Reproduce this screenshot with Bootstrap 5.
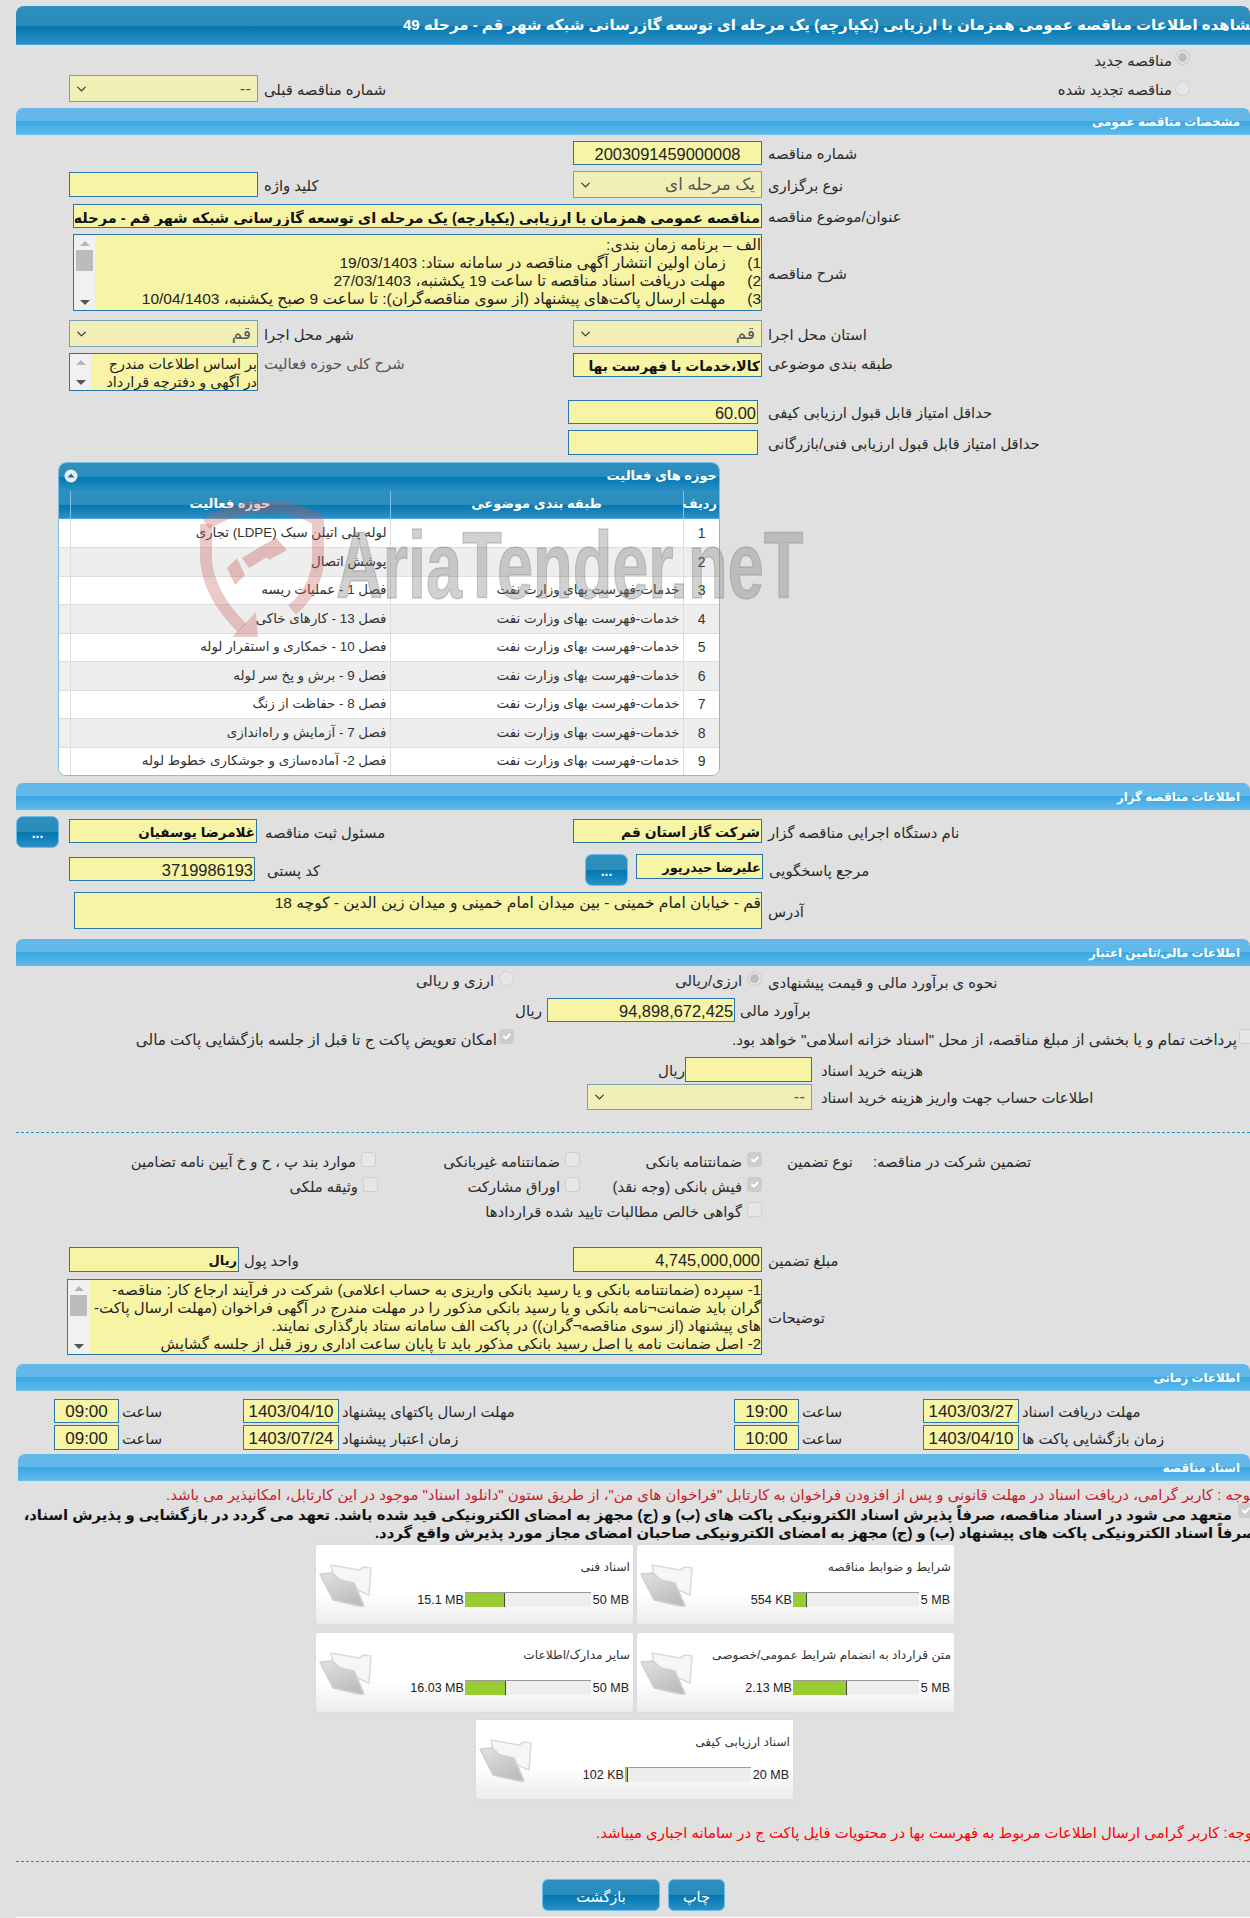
<!DOCTYPE html>
<html lang="fa">
<head>
<meta charset="utf-8">
<title>مشاهده اطلاعات مناقصه</title>
<link href="https://cdn.jsdelivr.net/npm/bootstrap@5.3.0/dist/css/bootstrap.min.css" rel="stylesheet">
<style>
html,body{margin:0;padding:0;background:#e0e0e0;overflow-x:hidden}
body{width:1250px;height:1918px;overflow:hidden;position:relative;font-family:"Liberation Sans","DejaVu Sans",sans-serif;font-size:14.8px;color:#2a2a2a;line-height:18px}
.ar{direction:rtl;unicode-bidi:isolate;white-space:nowrap}
.lbl{margin-left:6px;font-size:14.8px;color:#2a2a2a;direction:rtl;white-space:nowrap;align-self:center;flex:none;padding-top:2px}
.lbl-top{align-self:flex-start;margin-top:0}
.lbl-g{color:#555}
.ml5{margin-left:5px}.ml9{margin-left:9px}.ml10{margin-left:10px}.ml8{margin-left:8px}.ml3{margin-left:3px}.ml2{margin-left:2px}.ml12{margin-left:12px}
.bar-t{margin:6px 0 0 16px;height:39px;border-radius:8px 8px 0 0;background:linear-gradient(#2e90bf 0,#2b8cbc 50%,#0277b0 51%,#2b90c6 97%,#5ab3e8 100%);color:#fff;font-weight:700;font-size:15px;overflow:hidden;display:flex;align-items:center;padding-left:387px;padding-bottom:2px}
.bar-t span{flex:none}
.bar-s{margin-left:16px;height:27px;border-radius:7px 7px 0 0;background:linear-gradient(#62b9e9 0,#62b9e9 48%,#3aa8e2 50%,#5db8ea 97%,#86c9ef 100%);color:#fff;font-weight:700;font-size:11.8px;text-align:right;padding:5px 10px 0 0;direction:rtl;line-height:18px}
.rw{display:flex;width:1250px}
.cl{width:573px;flex:none;display:flex;padding-left:69px}
.cl568{width:568px}.cl585{width:585px}.cl16{padding-left:16px}
.cr{flex:none;display:flex}
.inp.form-control,.sel.form-select,.tbox{border:1px solid #2976ab;border-radius:0;background-color:#f7f5a5;color:#222;padding:0 1px;font-size:15px;line-height:20px;min-height:0;box-shadow:none;font-family:"Liberation Sans","DejaVu Sans",sans-serif}
.inp.form-control{height:24px;direction:rtl;text-align:right;flex:none;padding-top:2px}
.inp.ltr{text-align:center;font-size:16.4px}
.inp.tm{font-size:17px}
.inp.num{font-size:16.4px}
.inp.bd{font-weight:700;color:#111;font-size:13.9px}
.inp.ttl{font-size:14.55px}
.inp.bq1{font-size:13.5px}
.inp.bq2{font-size:13px}
.inp.h25{height:25px}
.sel.form-select{height:27px;border-color:#7c9fb4;background-color:#f2efb6;color:#555;direction:rtl;text-align:right;padding:0 6px 0 24px;background-position:left 5px center;background-size:13px 10px;font-size:16.8px;opacity:1;flex:none}
.w189{width:189px}.w127{width:127px}.w186{width:186px}.w170{width:170px}.w190{width:190px}.w188{width:188px}.w225{width:225px}.w96{width:96px}.w65{width:65px}.w689{width:689px}.w688{width:688px}.w695{width:695px}
.h77{height:77px}.h38{height:38px}.h37{height:37px}.h76{height:76px}
.mt3{margin-top:3px}
.ms73{margin-left:73px}.ms74{margin-left:74px}.ms67{margin-left:67px}
.tbox{display:flex;overflow:hidden;font-size:15px;line-height:18px;direction:ltr;padding:0;flex:none}
.tsm{font-size:14.4px}
.tlg{font-size:15.5px}
.sbar{flex:none;width:21px;background:#f1f1f1;display:flex;flex-direction:column;align-items:center;padding:6px 0 5px;justify-content:space-between}
.sbar i{display:block;width:0;height:0;border-left:5px solid transparent;border-right:5px solid transparent}
.sbar .up{border-bottom:5px solid #b5b5b5}
.sbar .dn{border-top:5px solid #555}
.sbar .th{flex:none;width:17px;height:21px;background:#bcbcbc;margin:4px 0 auto}
.ttxt{flex:1;direction:rtl;text-align:right;white-space:pre;padding:1px 0 0;overflow:hidden;color:#222;min-width:0}
.rg.form-check-input,.ck.form-check-input{margin:0;flex:none;float:none;width:15px;height:15px;opacity:1;background-color:#e6e6e6;border:1px solid #cfcfcf}
.rg.form-check-input{border-radius:50%}
.rg.form-check-input:checked{background-image:none;background-color:#bdbdbd;box-shadow:inset 0 0 0 2px #e6e6e6}
.ck.form-check-input{border-radius:3px}
.ck.form-check-input:checked{background-color:#cdcdcd;border-color:#cdcdcd}
.rg.form-check-input.mr60{margin-right:60px}
.gap1{margin-right:3px;align-self:center}
/* vertical rhythm */
.a1{height:20px;margin-top:5px}.a2{height:27px;margin-top:5px}
.s1{margin-top:6px}
.r1{height:24px;margin-top:6px}.r2{height:27px;margin-top:6px}.r3{height:24px;margin-top:6px}.r4{height:77px;margin-top:6px}
.r5{height:27px;margin-top:9px}.r6{height:38px;margin-top:6px}.r7{height:24px;margin-top:9px}.r8{height:25px;margin-top:6px}
.s2{margin-top:7px}
.q1{height:32px;margin-top:6px}.q2{height:32px;margin-top:6px}.q3{height:37px;margin-top:6px}
.s3{margin-top:10px}
.m1{height:22px;margin-top:5px}.m2{height:24px;margin-top:5px}.m3{height:19px;margin-top:7px}.m4{height:25px;margin-top:9px}.m5{height:26px;margin-top:2px}
.dsh{margin-left:16px;border-top:1px dashed #2a8cc4;height:0}
.d1{margin-top:22px}.d2{margin-top:19px}
.g1{height:20px;margin-top:19px}.g2{height:20px;margin-top:5px}.g3{height:20px;margin-top:5px}
.f1{height:25px;margin-top:25px}.f2{height:76px;margin-top:7px}
.s4{margin-top:9px}
.t1{height:24px;margin-top:8px}.t2{height:25px;margin-top:2px}
.s5{margin-top:4px;margin-left:18px}
/* fixed-width flex cells that push their content to the visual right */
.e{display:flex;justify-content:flex-end;align-items:flex-start;flex:none}
.e514{width:514px}.e248{width:248px}.e547{width:547px}.e685{width:685px}.e587{width:587px}.e740{width:740px}
.e376{width:376px}.e204{width:204px}.e378{width:378px}.e202{width:202px}.e182{width:182px}
.e-t{margin-right:5px;direction:rtl;white-space:nowrap;line-height:20px;font-size:14.8px}
.e-m{margin-right:5px;direction:rtl;white-space:nowrap;align-self:center;padding-top:2px;font-size:15px}
.e-c{margin-right:2px;font-size:15.2px}
.tc0{width:243px;padding-left:54px;display:flex;flex:none}
.tc1{width:491px;display:flex;flex:none}
.tc2{width:189px;display:flex;flex:none}
.tc3{display:flex;flex:none}
.gt1{margin-left:25px;direction:rtl;white-space:nowrap;line-height:20px}
.gt2{margin-left:20px;direction:rtl;white-space:nowrap;line-height:20px}
.rd1{height:17px;margin-top:5px;color:#c8202a;font-size:14.9px;padding-left:166px;display:flex;overflow:hidden}
.rd1 span{flex:none}
.bdn{height:39px;display:flex;overflow:hidden;width:1250px}
.bdn-t{flex:none;width:1232px;margin-top:3px;direction:rtl;font-weight:700;color:#111;font-size:14.8px;line-height:18px;text-align:right}
.l2{display:block;white-space:nowrap}
.l2b{margin-right:-24px}
.ckb{margin:0 0 0 6px !important}
.dots{width:43px;height:32px;padding:0;border-radius:7px;border:1px solid #6cbfe8;background:linear-gradient(#2e90bf 0,#2b8cbc 50%,#0277b0 51%,#2b90c6 100%);color:#fff;font-weight:700;font-size:14px;line-height:32px;flex:none}
.dots:hover{color:#fff}
.dm{margin-right:10px}
.dq{margin-right:8px}
/* panel */
.pnl{margin:7px 0 0 58px;width:662px;height:314px;border:1px solid #7fbde3;border-radius:8px;background:#fff;overflow:hidden;position:relative;padding:0}
.pnl-h{height:28px;background:linear-gradient(#2e90bf 0,#2b8cbc 50%,#0277b0 51%,#2b90c6 100%);color:#fff;font-weight:700;font-size:13px;direction:rtl;display:flex;justify-content:space-between;align-items:center;padding:0 2px 2px 5px}
.pnl-t.table{margin:0;table-layout:fixed;width:661px;direction:ltr;--bs-table-bg:transparent}
.pnl-t th{height:28px;padding:0 3px 2px;border:0;border-left:1px solid #7fc1ea;text-align:center;color:#fff;font-size:13px;font-weight:700;background:linear-gradient(#2e90bf 0,#2b8cbc 50%,#0277b0 51%,#2b90c6 96%,#6abbec 100%);direction:rtl;vertical-align:middle;line-height:18px}
.pnl-t th:first-child{border-left:0}
.pnl-t td{height:28.5px;padding:0 3px;border:0;border-left:1px solid #ddd;border-bottom:1px solid #ddd;font-size:13.4px;direction:rtl;text-align:right;vertical-align:middle;color:#333;white-space:nowrap;background:#fff;line-height:18px}
.pnl-t td:first-child{border-left:0}
.pnl-t tr:nth-child(even) td{background:#eee}
.pnl-t td:last-child{text-align:center;font-size:14px}
.c0{width:11px}.c1{width:320px}.c2{width:293px}.c3{width:37px}
.wm{position:absolute;left:200px;top:500px;width:610px;height:140px;pointer-events:none}
.wm-txt{position:absolute;left:136px;top:16px;font:700 94px/100px "Liberation Sans",sans-serif;color:rgba(120,120,120,.34);white-space:nowrap;transform:scaleX(.69);transform-origin:left top;-webkit-text-stroke:1.5px rgba(120,120,120,.34)}
.wm svg{position:absolute;left:0;top:0}
/* cards */
.cds{display:flex;gap:4px}
.cds1{margin:3px 0 0 316px}.cds2{margin:9px 0 0 316px}.cds3{margin:8px 0 0 476px}
.fc.card{width:317px;height:79px;flex:none;border:0;border-radius:2px;background:linear-gradient(#fff 0,#fff 60%,#ececec 100%);box-shadow:0 0 2px #d4d4d4;position:relative;display:block}
.fc-t{direction:rtl;text-align:right;font-size:12.2px;padding:13px 3px 0 0;white-space:nowrap;color:#333;height:47px;line-height:18px}
.fc svg{position:absolute;left:0;top:0}
.fc-p{display:flex;justify-content:flex-end;align-items:center;height:15px;font-size:12.5px;color:#222;padding-right:4px;white-space:nowrap}
.fc-a{flex:none;margin-right:1px}
.fc-b{padding-left:2px;flex:none}
.fc-p .progress{width:126px;height:15px;flex:none;border-radius:0;background:#eee;border-top:1px solid #999}
.fc-p .progress-bar{background:#99cc33;border-right:1px solid #444;box-sizing:border-box}
.fp{fill:#f6f6f6;stroke:#dadada;stroke-width:1.5;stroke-linejoin:round}
.ff{fill:url(#fg);stroke:#d0d0d0;stroke-width:1.6;stroke-linejoin:round}
.rd2{height:18px;margin-top:25px;padding-left:596px;display:flex;overflow:hidden;color:#f00;font-size:14.9px}
.rd2 span{flex:none}
.bts{display:flex;margin:17px 0 0 542px;gap:8px}
.bk{height:32px;width:118px;padding:3px 0 0;border-radius:6px;border:1px solid #6cbfe8;background:linear-gradient(#2e90bf 0,#2b8cbc 50%,#0277b0 51%,#2b90c6 100%);color:#fff;font-size:14.5px;line-height:20px}
.bk.nr{width:57px}
.bk:hover{color:#fff}
.wht{position:absolute;left:16px;right:0;top:1917px;height:1px;background:#fff}
</style>
</head>
<body>
<svg width="0" height="0" class="position-absolute"><defs><linearGradient id="fg" x1="0" y1="0" x2="0.6" y2="1"><stop offset="0" stop-color="#e2e2e2"/><stop offset="1" stop-color="#bdbdbd"/></linearGradient>
<symbol id="fold" viewBox="0 0 60 65"><path class="fp" d="M15 20 43 25 48 22 55 23 53 50 18 35z"/><path class="ff" d="M4 29 16 28 24 35 38 38 48 61 43 61 17 55C12 45 8 37 4 29z"/></symbol></defs></svg>
<div class="bar-t"><span class="ar">مشاهده اطلاعات مناقصه عمومی همزمان با ارزیابی (یکپارچه) یک مرحله ای توسعه گازرسانی شبکه شهر قم - مرحله 49</span></div>

<div class="rw a1 justify-content-end"><span class="lbl gap1">مناقصه جدید</span><input class="form-check-input rg mr60" type="radio" checked disabled></div>
<div class="rw a2">
 <div class="cl"><select class="form-select sel w189" disabled><option>--</option></select><span class="lbl">شماره مناقصه قبلی</span></div>
 <div class="cr ms-auto"><span class="lbl gap1">مناقصه تجدید شده</span><input class="form-check-input rg mr60 align-self-center" type="radio" disabled></div>
</div>

<div class="bar-s s1">مشخصات مناقصه عمومی</div>

<div class="rw r1"><div class="cl"></div><div class="cr"><input class="form-control inp ltr w189" readonly value="2003091459000008"><span class="lbl">شماره مناقصه</span></div></div>
<div class="rw r2">
 <div class="cl align-items-center"><input class="form-control inp w189 h25" readonly value=""><span class="lbl">کلید واژه</span></div>
 <div class="cr"><select class="form-select sel w189" disabled><option>یک مرحله ای</option></select><span class="lbl">نوع برگزاری</span></div>
</div>
<div class="rw r3"><div class="cr ms73"><input class="form-control inp bd ttl w689" readonly value="مناقصه عمومی همزمان با ارزیابی (یکپارچه) یک مرحله ای توسعه گازرسانی شبکه شهر قم - مرحله 49"><span class="lbl">عنوان/موضوع مناقصه</span></div></div>
<div class="rw r4"><div class="cr ms73"><div class="tbox tlg w689 h77"><div class="sbar"><i class="up"></i><div class="th"></div><i class="dn"></i></div><div class="ttxt">الف – برنامه زمان بندی:
1)     زمان اولین انتشار آگهی مناقصه در سامانه ستاد: 19/03/1403
2)     مهلت دریافت اسناد مناقصه تا ساعت 19 یکشنبه، 27/03/1403
3)     مهلت ارسال پاکت‌های پیشنهاد (از سوی مناقصه‌گران): تا ساعت 9 صبح یکشنبه، 10/04/1403</div></div><span class="lbl">شرح مناقصه</span></div></div>
<div class="rw r5">
 <div class="cl"><select class="form-select sel w189" disabled><option>قم</option></select><span class="lbl">شهر محل اجرا</span></div>
 <div class="cr"><select class="form-select sel w189" disabled><option>قم</option></select><span class="lbl">استان محل اجرا</span></div>
</div>
<div class="rw r6">
 <div class="cl"><div class="tbox tsm w189 h38"><div class="sbar"><i class="up"></i><i class="dn"></i></div><div class="ttxt">بر اساس اطلاعات مندرج
در آگهی و دفترچه قرارداد</div></div><span class="lbl lbl-top lbl-g">شرح کلی حوزه فعالیت</span></div>
 <div class="cr align-items-start"><input class="form-control inp bd w189" readonly value="کالا،خدمات با فهرست بها"><span class="lbl lbl-top">طبقه بندی موضوعی</span></div>
</div>
<div class="rw r7"><div class="cl cl568"></div><div class="cr"><input class="form-control inp num w190" readonly value="60.00"><span class="lbl ml10">حداقل امتیاز قابل قبول ارزیابی کیفی</span></div></div>
<div class="rw r8"><div class="cl cl568"></div><div class="cr"><input class="form-control inp w190 h25" readonly value=""><span class="lbl ml10">حداقل امتیاز قابل قبول ارزیابی فنی/بازرگانی</span></div></div>

<div class="pnl">
 <div class="pnl-h"><span>حوزه های فعالیت</span><svg width="14" height="14" viewBox="0 0 14 14"><circle cx="7" cy="7" r="6.5" fill="#e8f1f7"/><path d="M3.5 8.5 7 4.5l3.5 4z" fill="#1b6c9b"/></svg></div>
 <table class="table pnl-t">
  <colgroup><col class="c0"><col class="c1"><col class="c2"><col class="c3"></colgroup>
  <thead><tr><th></th><th>حوزه فعالیت</th><th>طبقه بندی موضوعی</th><th>ردیف</th></tr></thead>
  <tbody>
  <tr><td></td><td>لوله پلی اتیلن سبک (LDPE) تجاری</td><td></td><td>1</td></tr>
  <tr><td></td><td>پوشش اتصال</td><td></td><td>2</td></tr>
  <tr><td></td><td>فصل 1 - عملیات ریسه</td><td>خدمات-فهرست بهای وزارت نفت</td><td>3</td></tr>
  <tr><td></td><td>فصل 13 - کارهای خاکی</td><td>خدمات-فهرست بهای وزارت نفت</td><td>4</td></tr>
  <tr><td></td><td>فصل 10 - خمکاری و استقرار لوله</td><td>خدمات-فهرست بهای وزارت نفت</td><td>5</td></tr>
  <tr><td></td><td>فصل 9 - برش و پخ سر لوله</td><td>خدمات-فهرست بهای وزارت نفت</td><td>6</td></tr>
  <tr><td></td><td>فصل 8 - حفاظت از زنگ</td><td>خدمات-فهرست بهای وزارت نفت</td><td>7</td></tr>
  <tr><td></td><td>فصل 7 - آزمایش و راه‌اندازی</td><td>خدمات-فهرست بهای وزارت نفت</td><td>8</td></tr>
  <tr><td></td><td>فصل 2- آماده‌سازی و جوشکاری خطوط لوله</td><td>خدمات-فهرست بهای وزارت نفت</td><td>9</td></tr>
  </tbody>
 </table>
</div>
<div class="wm">
 <svg width="130" height="140" viewBox="0 0 130 140" fill="none">
  <path d="M6 24C40 2 88 2 118 20V62C116 86 104 100 92 110" stroke="rgba(200,90,90,.32)" stroke-width="12"/>
  <path d="M6 24V60C8 86 22 108 42 128" stroke="rgba(200,90,90,.32)" stroke-width="12"/>
  <path d="M32 137 58 137 56 112z" fill="rgba(200,90,90,.32)"/>
  <path d="M27 68 37 58 45 75 35 85zM42 58 60 47 67 57 49 68zM58 48 76 38 87 50 69 60z" fill="rgba(200,90,90,.36)"/>
 </svg>
 <span class="wm-txt">AriaTender.neT</span>
</div>

<div class="bar-s s2">اطلاعات مناقصه گزار</div>
<div class="rw q1">
 <div class="cl cl16"><button class="btn dots dm" type="button">...</button><input class="form-control inp bd bq1 w188 mt3" readonly value="غلامرضا یوسفیان"><span class="lbl ml8">مسئول ثبت مناقصه</span></div>
 <div class="cr"><input class="form-control inp bd w189 mt3" readonly value="شرکت گاز استان قم"><span class="lbl">نام دستگاه اجرایی مناقصه گزار</span></div>
</div>
<div class="rw q2">
 <div class="cl cl585"><input class="form-control inp num w186 mt3" readonly value="3719986193"><span class="lbl ml12">کد پستی</span></div>
 <div class="cr"><button class="btn dots dq" type="button">...</button><input class="form-control inp bd bq2 w127 h25" readonly value="علیرضا حیدرپور"><span class="lbl">مرجع پاسخگویی</span></div>
</div>
<div class="rw q3"><div class="cr ms74"><div class="tbox tlg w688 h37"><div class="ttxt">قم - خیابان امام خمینی - بین میدان امام خمینی و میدان زین الدین - کوچه 18</div></div><span class="lbl">آدرس</span></div></div>

<div class="bar-s s3">اطلاعات مالی/تامین اعتبار</div>
<div class="rw m1">
 <div class="e e514"><span class="e-t">ارزی و ریالی</span><input class="form-check-input rg" type="radio" disabled></div>
 <div class="e e248"><span class="e-t">ارزی/ریالی</span><input class="form-check-input rg" type="radio" checked disabled></div>
 <span class="lbl">نحوه ی برآورد مالی و قیمت پیشنهادی</span>
</div>
<div class="rw m2">
 <div class="e e547"><span class="e-m">ریال</span></div>
 <input class="form-control inp num w188" readonly value="94,898,672,425"><span class="lbl ml5">برآورد مالی</span>
</div>
<div class="rw m3">
 <div class="e e514"><span class="e-m e-c">امکان تعویض پاکت ج تا قبل از جلسه بازگشایی پاکت مالی</span><input class="form-check-input ck" type="checkbox" checked disabled></div>
 <div class="e e740"><span class="e-m e-c">پرداخت تمام و یا بخشی از مبلغ مناقصه، از محل "اسناد خزانه اسلامی" خواهد بود.</span><input class="form-check-input ck" type="checkbox" disabled></div>
</div>
<div class="rw m4">
 <div class="e e685"><span class="e-m me-0">ریال</span></div>
 <input class="form-control inp w127 h25" readonly value=""><span class="lbl ml9">هزینه خرید اسناد</span>
</div>
<div class="rw m5">
 <div class="e e587"></div>
 <select class="form-select sel w225 h-100" disabled><option>--</option></select><span class="lbl ml9">اطلاعات حساب جهت واریز هزینه خرید اسناد</span>
</div>

<div class="dsh d1"></div>

<div class="rw g1">
 <div class="e e376"><span class="e-t">موارد بند پ ، ح و خ آیین نامه تضامین</span><input class="form-check-input ck" type="checkbox" disabled></div>
 <div class="e e204"><span class="e-t">ضمانتنامه غیربانکی</span><input class="form-check-input ck" type="checkbox" disabled></div>
 <div class="e e182"><span class="e-t">ضمانتنامه بانکی</span><input class="form-check-input ck" type="checkbox" checked disabled></div>
 <span class="gt1">نوع تضمین</span><span class="gt2">تضمین شرکت در مناقصه:</span>
</div>
<div class="rw g2">
 <div class="e e378"><span class="e-t">وثیقه ملکی</span><input class="form-check-input ck" type="checkbox" disabled></div>
 <div class="e e202"><span class="e-t">اوراق مشارکت</span><input class="form-check-input ck" type="checkbox" disabled></div>
 <div class="e e182"><span class="e-t">فیش بانکی (وجه نقد)</span><input class="form-check-input ck" type="checkbox" checked disabled></div>
</div>
<div class="rw g3">
 <div class="e e378"></div><div class="e e202"></div>
 <div class="e e182"><span class="e-t">گواهی خالص مطالبات تایید شده قراردادها</span><input class="form-check-input ck" type="checkbox" disabled></div>
</div>

<div class="rw f1">
 <div class="cl"><input class="form-control inp bd bq2 w170 h25" readonly value="ریال"><span class="lbl ml5">واحد پول</span></div>
 <div class="cr"><input class="form-control inp num w189 h25" readonly value="4,745,000,000"><span class="lbl">مبلغ تضمین</span></div>
</div>
<div class="rw f2"><div class="cr ms67"><div class="tbox w695 h76"><div class="sbar"><i class="up"></i><div class="th"></div><i class="dn"></i></div><div class="ttxt">1- سپرده (ضمانتنامه بانکی و یا رسید بانکی واریزی به حساب اعلامی) شرکت در فرآیند ارجاع کار: مناقصه-
گران باید ضمانت¬نامه بانکی و یا رسید بانکی مذکور را در مهلت مندرج در آگهی فراخوان (مهلت ارسال پاکت-
های پیشنهاد (از سوی مناقصه¬گران)) در پاکت الف سامانه ستاد بارگذاری نمایند.
2- اصل ضمانت نامه یا اصل رسید بانکی مذکور باید تا پایان ساعت اداری روز قبل از جلسه گشایش</div></div><span class="lbl">توضیحات</span></div></div>

<div class="bar-s s4">اطلاعات زمانی</div>
<div class="rw t1">
 <div class="tc0"><input class="form-control inp ltr tm w65" readonly value="09:00"><span class="lbl ml3">ساعت</span></div>
 <div class="tc1"><input class="form-control inp ltr tm w96" readonly value="1403/04/10"><span class="lbl ml3">مهلت ارسال پاکتهای پیشنهاد</span></div>
 <div class="tc2"><input class="form-control inp ltr tm w65" readonly value="19:00"><span class="lbl ml3">ساعت</span></div>
 <div class="tc3"><input class="form-control inp ltr tm w96" readonly value="1403/03/27"><span class="lbl ml3">مهلت دریافت اسناد</span></div>
</div>
<div class="rw t2">
 <div class="tc0"><input class="form-control inp ltr tm w65 h25" readonly value="09:00"><span class="lbl ml3">ساعت</span></div>
 <div class="tc1"><input class="form-control inp ltr tm w96 h25" readonly value="1403/07/24"><span class="lbl ml3">زمان اعتبار پیشنهاد</span></div>
 <div class="tc2"><input class="form-control inp ltr tm w65 h25" readonly value="10:00"><span class="lbl ml3">ساعت</span></div>
 <div class="tc3"><input class="form-control inp ltr tm w96 h25" readonly value="1403/04/10"><span class="lbl ml3">زمان بازگشایی پاکت ها</span></div>
</div>

<div class="bar-s s5">اسناد مناقصه</div>
<div class="rd1"><span class="ar">توجه : کاربر گرامی، دریافت اسناد در مهلت قانونی و پس از افزودن فراخوان به کارتابل "فراخوان های من"، از طریق ستون "دانلود اسناد" موجود در این کارتابل، امکانپذیر می باشد.</span></div>
<div class="bdn">
 <div class="bdn-t"><span class="l2">متعهد می شود در اسناد مناقصه، صرفاً پذیرش اسناد الکترونیکی پاکت های (ب) و (ج) مجهز به امضای الکترونیکی قید شده باشد. تعهد می گردد در بازگشایی و پذیرش اسناد،</span><span class="l2 l2b">صرفاً اسناد الکترونیکی پاکت های پیشنهاد (ب) و (ج) مجهز به امضای الکترونیکی صاحبان امضای مجاز مورد پذیرش واقع گردد.</span></div>
 <input class="form-check-input ck ckb" type="checkbox" checked disabled>
</div>

<div class="cds cds1">
 <div class="card fc"><svg width="60" height="65"><use href="#fold"/></svg><div class="fc-t">اسناد فنی</div><div class="fc-p"><span class="fc-a">15.1 MB</span><div class="progress"><div class="progress-bar" style="width:32%"></div></div><span class="fc-b">50 MB</span></div></div>
 <div class="card fc"><svg width="60" height="65"><use href="#fold"/></svg><div class="fc-t">شرایط و ضوابط مناقصه</div><div class="fc-p"><span class="fc-a">554 KB</span><div class="progress"><div class="progress-bar" style="width:11%"></div></div><span class="fc-b">5 MB</span></div></div>
</div>
<div class="cds cds2">
 <div class="card fc"><svg width="60" height="65"><use href="#fold"/></svg><div class="fc-t">سایر مدارک/اطلاعات</div><div class="fc-p"><span class="fc-a">16.03 MB</span><div class="progress"><div class="progress-bar" style="width:33%"></div></div><span class="fc-b">50 MB</span></div></div>
 <div class="card fc"><svg width="60" height="65"><use href="#fold"/></svg><div class="fc-t">متن قرارداد به انضمام شرایط عمومی/خصوصی</div><div class="fc-p"><span class="fc-a">2.13 MB</span><div class="progress"><div class="progress-bar" style="width:43%"></div></div><span class="fc-b">5 MB</span></div></div>
</div>
<div class="cds cds3">
 <div class="card fc"><svg width="60" height="65"><use href="#fold"/></svg><div class="fc-t">اسناد ارزیابی کیفی</div><div class="fc-p"><span class="fc-a">102 KB</span><div class="progress"><div class="progress-bar" style="width:2.4%"></div></div><span class="fc-b">20 MB</span></div></div>
</div>

<div class="rd2"><span class="ar">توجه: کاربر گرامی ارسال اطلاعات مربوط به فهرست بها در محتویات فایل پاکت ج در سامانه اجباری میباشد.</span></div>
<div class="dsh d2"></div>
<div class="bts"><button class="btn bk" type="button">بازگشت</button><button class="btn bk nr" type="button">چاپ</button></div>
<div class="wht"></div>
<script src="https://cdn.jsdelivr.net/npm/bootstrap@5.3.0/dist/js/bootstrap.bundle.min.js"></script>
</body>
</html>
